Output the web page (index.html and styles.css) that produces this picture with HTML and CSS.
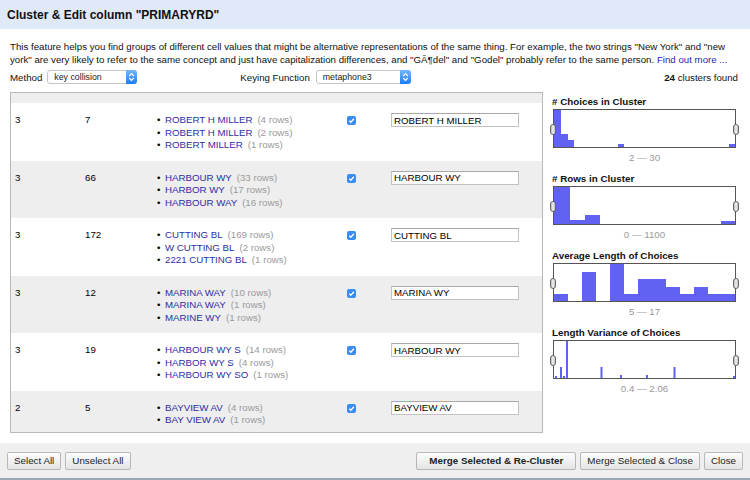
FILE: index.html
```html
<!DOCTYPE html>
<html>
<head>
<meta charset="utf-8">
<title>Cluster &amp; Edit</title>
<link rel="stylesheet" href="styles.css">
</head>
<body>
<div class="titlebar">Cluster &amp; Edit column "PRIMARYRD"</div>
<div class="content">
  <p class="desc">This feature helps you find groups of different cell values that might be alternative representations of the same thing. For example, the two strings "New York" and "new york" are very likely to refer to the same concept and just have capitalization differences, and "GÃ¶del" and "Godel" probably refer to the same person. <a class="more">Find out more ...</a></p>
  <div class="controls">
    <span>Method</span>
    <div class="select method"><span>key collision</span><span class="stepper"><svg width="7" height="10" viewBox="0 0 7 10"><polyline points="1.2,4 3.5,1.7 5.8,4" fill="none" stroke="#fff" stroke-width="1.2"/><polyline points="1.2,6 3.5,8.3 5.8,6" fill="none" stroke="#fff" stroke-width="1.2"/></svg></span></div>
    <span class="keying">Keying Function</span>
    <div class="select keyfn"><span>metaphone3</span><span class="stepper"><svg width="7" height="10" viewBox="0 0 7 10"><polyline points="1.2,4 3.5,1.7 5.8,4" fill="none" stroke="#fff" stroke-width="1.2"/><polyline points="1.2,6 3.5,8.3 5.8,6" fill="none" stroke="#fff" stroke-width="1.2"/></svg></span></div>
    <span class="found"><b>24</b> clusters found</span>
  </div>
  <div class="main">
    <div class="table">
      <div class="stub"></div>
      <div class="row">
        <div>3</div><div>7</div>
        <ul class="choices">
          <li><a>ROBERT H MILLER</a><span class="cnt">(4 rows)</span></li>
          <li><a>ROBERT H MILLER</a><span class="cnt">(2 rows)</span></li>
          <li><a>ROBERT MILLER</a><span class="cnt">(1 rows)</span></li>
        </ul>
        <div class="chk"><svg width="9" height="9" viewBox="0 0 9 9"><rect x="0" y="0" width="9" height="9" rx="2" fill="#3a8cf0"/><polyline points="2.2,4.6 3.8,6.2 6.9,2.7" fill="none" stroke="#fff" stroke-width="1.3"/></svg></div>
        <div class="val"><input type="text" value="ROBERT H MILLER"></div>
      </div>
      <div class="row alt">
        <div>3</div><div>66</div>
        <ul class="choices">
          <li><a>HARBOUR WY</a><span class="cnt">(33 rows)</span></li>
          <li><a>HARBOR WY</a><span class="cnt">(17 rows)</span></li>
          <li><a>HARBOUR WAY</a><span class="cnt">(16 rows)</span></li>
        </ul>
        <div class="chk"><svg width="9" height="9" viewBox="0 0 9 9"><rect x="0" y="0" width="9" height="9" rx="2" fill="#3a8cf0"/><polyline points="2.2,4.6 3.8,6.2 6.9,2.7" fill="none" stroke="#fff" stroke-width="1.3"/></svg></div>
        <div class="val"><input type="text" value="HARBOUR WY"></div>
      </div>
      <div class="row">
        <div>3</div><div>172</div>
        <ul class="choices">
          <li><a>CUTTING BL</a><span class="cnt">(169 rows)</span></li>
          <li><a>W CUTTING BL</a><span class="cnt">(2 rows)</span></li>
          <li><a>2221 CUTTING BL</a><span class="cnt">(1 rows)</span></li>
        </ul>
        <div class="chk"><svg width="9" height="9" viewBox="0 0 9 9"><rect x="0" y="0" width="9" height="9" rx="2" fill="#3a8cf0"/><polyline points="2.2,4.6 3.8,6.2 6.9,2.7" fill="none" stroke="#fff" stroke-width="1.3"/></svg></div>
        <div class="val"><input type="text" value="CUTTING BL"></div>
      </div>
      <div class="row alt">
        <div>3</div><div>12</div>
        <ul class="choices">
          <li><a>MARINA WAY</a><span class="cnt">(10 rows)</span></li>
          <li><a>MARINA WAY</a><span class="cnt">(1 rows)</span></li>
          <li><a>MARINE WY</a><span class="cnt">(1 rows)</span></li>
        </ul>
        <div class="chk"><svg width="9" height="9" viewBox="0 0 9 9"><rect x="0" y="0" width="9" height="9" rx="2" fill="#3a8cf0"/><polyline points="2.2,4.6 3.8,6.2 6.9,2.7" fill="none" stroke="#fff" stroke-width="1.3"/></svg></div>
        <div class="val"><input type="text" value="MARINA WY"></div>
      </div>
      <div class="row">
        <div>3</div><div>19</div>
        <ul class="choices">
          <li><a>HARBOUR WY S</a><span class="cnt">(14 rows)</span></li>
          <li><a>HARBOR WY S</a><span class="cnt">(4 rows)</span></li>
          <li><a>HARBOUR WY SO</a><span class="cnt">(1 rows)</span></li>
        </ul>
        <div class="chk"><svg width="9" height="9" viewBox="0 0 9 9"><rect x="0" y="0" width="9" height="9" rx="2" fill="#3a8cf0"/><polyline points="2.2,4.6 3.8,6.2 6.9,2.7" fill="none" stroke="#fff" stroke-width="1.3"/></svg></div>
        <div class="val"><input type="text" value="HARBOUR WY"></div>
      </div>
      <div class="row alt">
        <div>2</div><div>5</div>
        <ul class="choices">
          <li><a>BAYVIEW AV</a><span class="cnt">(4 rows)</span></li>
          <li><a>BAY VIEW AV</a><span class="cnt">(1 rows)</span></li>
        </ul>
        <div class="chk"><svg width="9" height="9" viewBox="0 0 9 9"><rect x="0" y="0" width="9" height="9" rx="2" fill="#3a8cf0"/><polyline points="2.2,4.6 3.8,6.2 6.9,2.7" fill="none" stroke="#fff" stroke-width="1.3"/></svg></div>
        <div class="val"><input type="text" value="BAYVIEW AV"></div>
      </div>
    </div>
    <div class="facets">
      <div class="facet">
        <h4># Choices in Cluster</h4>
        <div class="hist">
          <svg width="181" height="37" viewBox="0 0 181 37">
            <g fill="#6262f2">
              <rect x="0" y="0" width="7" height="37"/>
              <rect x="7" y="24" width="7" height="13"/>
              <rect x="14" y="30" width="6" height="7"/>
              <rect x="64" y="34" width="6" height="3"/>
              <rect x="175" y="34" width="6" height="3"/>
            </g>
          </svg>
          <span class="handle left"></span><span class="handle right"></span>
        </div>
        <div class="range">2 — 30</div>
      </div>
      <div class="facet">
        <h4># Rows in Cluster</h4>
        <div class="hist">
          <svg width="181" height="37" viewBox="0 0 181 37">
            <g fill="#6262f2">
              <rect x="0" y="0" width="16" height="37"/>
              <rect x="16" y="33" width="15" height="4"/>
              <rect x="31" y="28" width="15" height="9"/>
              <rect x="167" y="34" width="14" height="3"/>
            </g>
          </svg>
          <span class="handle left"></span><span class="handle right"></span>
        </div>
        <div class="range">0 — 1100</div>
      </div>
      <div class="facet">
        <h4>Average Length of Choices</h4>
        <div class="hist">
          <svg width="181" height="37" viewBox="0 0 181 37">
            <g fill="#6262f2">
              <rect x="0" y="30" width="14" height="7"/>
              <rect x="28" y="8" width="14" height="29"/>
              <rect x="56" y="0" width="14" height="37"/>
              <rect x="70" y="30" width="14" height="7"/>
              <rect x="84" y="15" width="28" height="22"/>
              <rect x="112" y="23" width="14" height="14"/>
              <rect x="126" y="30" width="14" height="7"/>
              <rect x="140" y="23" width="14" height="14"/>
              <rect x="154" y="30" width="27" height="7"/>
            </g>
          </svg>
          <span class="handle left"></span><span class="handle right"></span>
        </div>
        <div class="range">5 — 17</div>
      </div>
      <div class="facet">
        <h4>Length Variance of Choices</h4>
        <div class="hist">
          <svg width="181" height="37" viewBox="0 0 181 37">
            <g fill="#6262f2">
              <rect x="1" y="35" width="2" height="2"/>
              <rect x="6" y="26" width="2" height="11"/>
              <rect x="9" y="35" width="2" height="2"/>
              <rect x="12" y="0" width="2" height="37"/>
              <rect x="46.5" y="26" width="2" height="11"/>
              <rect x="66" y="34" width="2" height="3"/>
              <rect x="92" y="34" width="2" height="3"/>
              <rect x="119.5" y="26" width="2" height="11"/>
              <rect x="179" y="35" width="2" height="2"/>
            </g>
          </svg>
          <span class="handle left"></span><span class="handle right"></span>
        </div>
        <div class="range">0.4 — 2.06</div>
      </div>
    </div>
  </div>
</div>
<div class="footer">
  <button class="btn">Select All</button>
  <button class="btn">Unselect All</button>
  <button class="btn primary push">Merge Selected &amp; Re-Cluster</button>
  <button class="btn">Merge Selected &amp; Close</button>
  <button class="btn">Close</button>
</div>
</body>
</html>
```
FILE: styles.css
```css
* { box-sizing: border-box; }
html, body { margin: 0; padding: 0; }
body {
  width: 750px;
  height: 480px;
  overflow: hidden;
  background: #fff;
  color: #111;
  font-family: "Liberation Sans", Arial, sans-serif;
  font-size: 9.7px;
}
.titlebar {
  height: 29px;
  background: #dfe9f8;
  padding-left: 7px;
  font-size: 12px;
  font-weight: bold;
  line-height: 30px;
  color: #111;
}
.content {
  height: 414px;
  padding: 11px 10px 0 10px;
  display: flex;
  flex-direction: column;
}
.desc {
  margin: 0;
  line-height: 13px;
}
.more { color: #1f1fa8; text-decoration: none; }
.controls {
  margin-top: 4px;
  height: 14px;
  display: flex;
  align-items: center;
  padding-right: 2px;
}
.select {
  position: relative;
  height: 14px;
  border: 1px solid #c6c6c6;
  border-radius: 3px;
  background: #fff;
  display: flex;
  align-items: center;
  padding-left: 6px;
  font-size: 8.8px;
  color: #222;
}
.method { width: 90px; margin-left: 5px; }
.keying { margin-left: 103px; }
.keyfn { width: 95px; margin-left: 6px; }
.stepper {
  position: absolute;
  right: -1px;
  top: -1px;
  width: 11px;
  height: 14px;
  border-radius: 0 3px 3px 0;
  background: linear-gradient(#74b8fb, #1c7cf2);
  display: flex;
  align-items: center;
  justify-content: center;
}
.stepper svg { display: block; }
.found { margin-left: auto; }
.main {
  margin-top: 8px;
  display: flex;
  align-items: flex-start;
}
.table {
  width: 533px;
  height: 341px;
  border: 1px solid #b9b9b9;
  overflow: hidden;
  flex: none;
}
.stub { height: 10px; background: #eeeeee; }
.row {
  display: grid;
  grid-template-columns: 70px 72px 189px 45px 128px;
  align-items: start;
  padding: 11px 0 9px 4px;
  line-height: 12.5px;
  color: #000;
}
.row.alt { background: #eeeeee; }
.choices { list-style: none; margin: 0; padding: 0; }
.choices li::before {
  content: "•";
  display: inline-block;
  width: 8px;
}
.choices a { color: #2d2da6; }
.cnt { margin-left: 5px; color: #9a9a9a; }
.chk svg { display: block; margin: 2px 0 0 1px; }
.val input {
  display: block;
  width: 128px;
  height: 14px;
  margin: -1px 0 0 0;
  padding: 0 2px;
  border: 1px solid #c2c2c2;
  border-top-color: #a9a9a9;
  background: #fff;
  font-family: "Liberation Sans", Arial, sans-serif;
  font-size: 9.7px;
  color: #000;
  outline: none;
}
.facets {
  margin-left: 9px;
  padding-top: 4px;
  width: 187px;
}
.facet { margin-bottom: 9px; }
.facet h4 {
  margin: 0;
  font-size: 9.8px;
  line-height: 12px;
  font-weight: bold;
  color: #111;
}
.hist {
  position: relative;
  width: 183px;
  height: 39px;
  margin: 1px 0 0 1px;
  border: 1px solid #555;
  background: #fff;
}
.hist svg { display: block; }
.handle {
  position: absolute;
  top: 14px;
  width: 6px;
  height: 11px;
  border: 1px solid #666;
  border-radius: 3px;
  background: linear-gradient(90deg, #bbb, #f4f4f4 50%, #bbb);
}
.handle.left { left: -4px; }
.handle.right { right: -4px; }
.range {
  width: 183px;
  margin: 4px 0 0 1px;
  line-height: 12px;
  text-align: center;
  color: #999;
}
.footer {
  height: 37px;
  background: #efefef;
  border-bottom: 2px solid #9aa7b6;
  display: flex;
  align-items: center;
  gap: 4px;
  padding: 0 7px;
}
.btn {
  height: 18px;
  padding: 0 6px;
  border: 1px solid #b8b8b8;
  border-radius: 2px;
  background: linear-gradient(#fdfdfd, #e4e4e4);
  font-family: "Liberation Sans", Arial, sans-serif;
  font-size: 9.8px;
  color: #222;
}
.btn.primary { font-weight: bold; padding: 0 12px; }
.push { margin-left: auto; }
```
